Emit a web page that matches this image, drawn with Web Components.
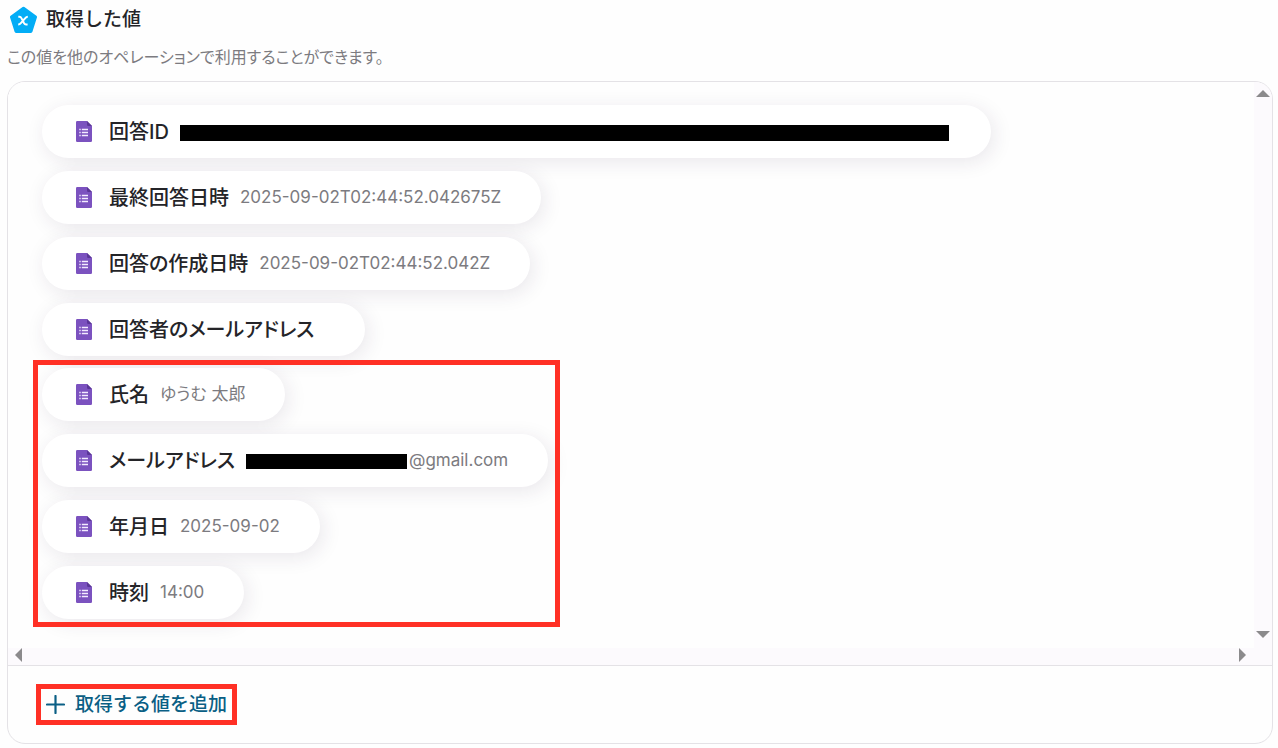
<!DOCTYPE html>
<html lang="ja">
<head>
<meta charset="utf-8">
<meta name="viewport" content="width=device-width, initial-scale=1">
<title>取得した値</title>
<style>
  body { margin: 0; background: #fefefe; color: #242428; font-family: Inter, "Noto Sans CJK JP", sans-serif; }
</style>
</head>
<body>
<value-page></value-page>
<script>
const define = (name, html, setup) => customElements.define(name, class extends HTMLElement {
  connectedCallback() {
    if (this.shadowRoot) return;
    this.attachShadow({ mode: 'open' }).innerHTML = html;
    if (setup) setup(this, this.shadowRoot);
  }
});

define('operation-icon', `
  <style>:host{display:block;width:28px;height:28px} svg{display:block}</style>
  <svg width="28" height="28" viewBox="0 0 28 28" aria-hidden="true">
    <path d="M14.500 2.200 26.500 11 22 25.400H7L2.500 11Z" fill="#03adf6" stroke="#03adf6" stroke-width="3" stroke-linejoin="round"/>
    <path d="M9.300 10.700H10.500Q11.700 10.700 12.300 11.900L15.100 17.200Q15.800 18.400 17 18.400H18.600M18.800 10.700Q17.400 10.700 16.500 11.900L11.800 17.200Q10.700 18.400 9.200 18.400" fill="none" stroke="#fff" stroke-width="2"/>
  </svg>`);

define('form-icon', `
  <style>:host{display:block;flex:none;width:16px;height:21px} svg{display:block}</style>
  <svg width="16" height="21" viewBox="0 0 16 21" aria-hidden="true">
    <path d="M1.200 0H11l5 5v14.800q0 1.200-1.200 1.200H1.200Q0 21 0 19.800V1.200Q0 0 1.200 0Z" fill="#7b52bf"/>
    <path d="M11 0v3.800q0 1.200 1.200 1.200H16Z" fill="#5a3696"/>
    <path d="M3.300 8.500h1.400M3.300 11.500h1.400M3.300 14.500h1.400M5.800 8.500H12M5.800 11.500H12M5.800 14.500H12" stroke="#f3ecff" stroke-width="1.300"/>
  </svg>`);

define('value-chip', `
  <style>
    :host{display:flex;align-items:center;box-sizing:border-box;width:max-content;height:53px;padding:0 40px 0 34px;border-radius:27px;background:#fff;box-shadow:3px 4px 20px rgba(50,30,70,.1);font-feature-settings:"palt"}
    .label{margin-left:17px;font-size:20px;font-weight:500;line-height:28px}
    .value{display:flex;align-items:center;margin-left:11px;padding-bottom:2px;color:#7c7b80;font-size:17px;line-height:24px}
  </style>
  <form-icon></form-icon>
  <span class="label"></span>
  <span class="value"><slot></slot></span>`,
  (host, root) => { root.querySelector('.label').textContent = host.getAttribute('label'); });

define('redacted-text', `
  <style>:host{display:block;width:161px;height:15px;margin:4px 2px 0 0;background:#000} :host([long]){width:769px;height:16px}</style>`);

define('marked-group', `
  <style>
    :host{display:grid;gap:13px;position:relative;width:max-content}
    :host::after{content:"";position:absolute;inset:-8px -12px -8px -9px;border:5px solid #ff3025;pointer-events:none}
  </style><slot></slot>`);

define('scroll-area', `
  <style>
    :host{display:grid;grid-template-columns:minmax(0,1fr) 18px;grid-template-rows:auto 17px;background:#fcfafd}
    .view{overflow:hidden;background:#fefefe;border-top-left-radius:17px}
    .bar{display:flex;justify-content:space-between;align-items:center}
    .v{flex-direction:column;padding:8px 0 10px}
    .h{padding:0 8px 3px 7px}
    button{display:block;padding:0;border:0;background:none}
    svg{display:block;fill:#8b8a8c}
  </style>
  <div class="view"><slot></slot></div>
  <div class="bar v">
    <button aria-label="上へスクロール"><svg width="14" height="7"><path d="M0 7 7 0 14 7Z"/></svg></button>
    <button aria-label="下へスクロール"><svg width="14" height="7"><path d="M0 0H14L7 7Z"/></svg></button>
  </div>
  <div class="bar h">
    <button aria-label="左へスクロール"><svg width="7" height="14"><path d="M7 0V14L0 7Z"/></svg></button>
    <button aria-label="右へスクロール"><svg width="7" height="14"><path d="M0 0V14L7 7Z"/></svg></button>
  </div>`);

define('add-button', `
  <style>
    :host{display:block;width:max-content}
    button{display:flex;align-items:center;gap:10px;height:41px;box-sizing:border-box;padding:0 5px;border:5px solid #ff3025;background:#fefefe;color:#0a5f85;font:500 19px/28px Inter,"Noto Sans CJK JP",sans-serif}
    svg{display:block}
  </style>
  <button type="button"><svg width="19" height="19" viewBox="0 0 19 19" aria-hidden="true"><path d="M9.500 1v17M1 9.500h17" stroke="currentColor" stroke-width="2.200" stroke-linecap="round"/></svg><slot></slot></button>`);

define('value-page', `
  <style>
    :host{display:block;padding:6px 5px 4px 7px}
    header{display:flex;align-items:center;gap:9px;padding-left:2px;height:28px}
    h1{margin:0;font-size:19px;line-height:28px;font-weight:500}
    p{margin:12px 0;font-size:16px;line-height:23px;color:#7c7b80;font-feature-settings:"palt"}
    section{border:1px solid #e4e2e6;border-radius:18px;overflow:hidden}
    .list{display:grid;gap:13px;justify-items:start;padding:23px 34px 29px}
    marked-group{margin-top:-1px}
    footer{border-top:1px solid #e4e2e6;padding:18px 28px}
  </style>
  <header><operation-icon></operation-icon><h1>取得した値</h1></header>
  <p>この値を他のオペレーションで利用することができます。</p>
  <section>
    <scroll-area><div class="list">
      <value-chip label="回答ID"><redacted-text long></redacted-text></value-chip>
      <value-chip label="最終回答日時">2025-09-02T02:44:52.042675Z</value-chip>
      <value-chip label="回答の作成日時">2025-09-02T02:44:52.042Z</value-chip>
      <value-chip label="回答者のメールアドレス"></value-chip>
      <marked-group>
        <value-chip label="氏名">ゆうむ 太郎</value-chip>
        <value-chip label="メールアドレス"><redacted-text></redacted-text>@gmail.com</value-chip>
        <value-chip label="年月日">2025-09-02</value-chip>
        <value-chip label="時刻">14:00</value-chip>
      </marked-group>
    </div></scroll-area>
    <footer><add-button>取得する値を追加</add-button></footer>
  </section>`);
</script>
</body>
</html>
